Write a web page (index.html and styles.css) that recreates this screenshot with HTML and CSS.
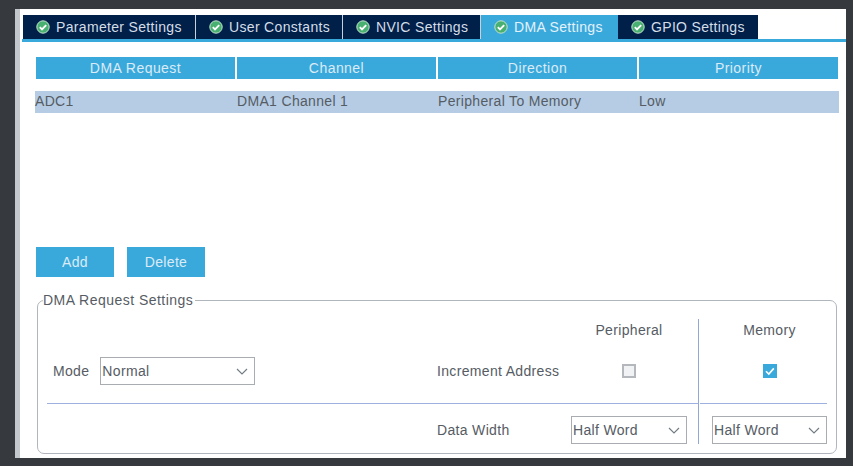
FILE: index.html
```html
<!DOCTYPE html>
<html lang="en">
<head>
    <meta charset="UTF-8">
    <title>DMA Settings</title>
    <link rel="stylesheet" href="styles.css">
</head>
<body>

<div class="panel">
    <div class="tabs">
        <div class="tab tab-param"><svg class="ok" viewBox="0 0 14 14"><circle cx="7" cy="7" r="6.2" fill="#48b070" stroke="#c4e2cf" stroke-width="1"/><path d="M3.8 7.1l2.2 2.2 4.2-4.2" fill="none" stroke="#fff" stroke-width="1.9"/></svg>Parameter Settings</div>
        <div class="tab tab-user"><svg class="ok" viewBox="0 0 14 14"><circle cx="7" cy="7" r="6.2" fill="#48b070" stroke="#c4e2cf" stroke-width="1"/><path d="M3.8 7.1l2.2 2.2 4.2-4.2" fill="none" stroke="#fff" stroke-width="1.9"/></svg>User Constants</div>
        <div class="tab tab-nvic"><svg class="ok" viewBox="0 0 14 14"><circle cx="7" cy="7" r="6.2" fill="#48b070" stroke="#c4e2cf" stroke-width="1"/><path d="M3.8 7.1l2.2 2.2 4.2-4.2" fill="none" stroke="#fff" stroke-width="1.9"/></svg>NVIC Settings</div>
        <div class="tab tab-dma active"><svg class="ok" viewBox="0 0 14 14"><circle cx="7" cy="7" r="6.2" fill="#48b070" stroke="#c4e2cf" stroke-width="1"/><path d="M3.8 7.1l2.2 2.2 4.2-4.2" fill="none" stroke="#fff" stroke-width="1.9"/></svg>DMA Settings</div>
        <div class="tab tab-gpio"><svg class="ok" viewBox="0 0 14 14"><circle cx="7" cy="7" r="6.2" fill="#48b070" stroke="#c4e2cf" stroke-width="1"/><path d="M3.8 7.1l2.2 2.2 4.2-4.2" fill="none" stroke="#fff" stroke-width="1.9"/></svg>GPIO Settings</div>
    </div>

    <div class="content">
        <div class="thead">
            <div>DMA Request</div>
            <div>Channel</div>
            <div>Direction</div>
            <div>Priority</div>
        </div>
        <div class="trow">
            <div>ADC1</div>
            <div>DMA1 Channel 1</div>
            <div>Peripheral To Memory</div>
            <div>Low</div>
        </div>

        <div class="buttons">
            <button class="btn">Add</button>
            <button class="btn">Delete</button>
        </div>

        <fieldset class="settings">
            <legend>DMA Request Settings</legend>
            <div class="grid">
                <div class="head-empty"></div>
                <div class="col-peri col-head">Peripheral</div>
                <div class="col-mem col-head">Memory</div>

                <div class="mode line">
                    <span class="mode-label">Mode</span>
                    <div class="combo combo-mode">Normal<svg class="chev" viewBox="0 0 12 7"><path d="M1 1l5 5 5-5" fill="none" stroke="#6f7a84" stroke-width="1.1"/></svg></div>
                </div>
                <div class="label line">Increment Address</div>
                <div class="col-peri line"><span class="check"></span></div>
                <div class="col-mem line"><span class="check checked"><svg viewBox="0 0 14 14"><path d="M3 7.2l2.8 2.8 5-5.6" fill="none" stroke="#fff" stroke-width="1.6"/></svg></span></div>

                <div class="last"></div>
                <div class="label last"><span class="last-text">Data Width</span></div>
                <div class="col-peri last"><div class="combo">Half Word<svg class="chev" viewBox="0 0 12 7"><path d="M1 1l5 5 5-5" fill="none" stroke="#6f7a84" stroke-width="1.1"/></svg></div></div>
                <div class="col-mem last"><div class="combo">Half Word<svg class="chev" viewBox="0 0 12 7"><path d="M1 1l5 5 5-5" fill="none" stroke="#6f7a84" stroke-width="1.1"/></svg></div></div>
            </div>
        </fieldset>
    </div>
</div>

</body>
</html>
```

FILE: styles.css
```css
html, body {
    height: 100%;
}
body {
    font-family: "Liberation Sans", Arial, sans-serif;
    font-size: 14px;
    letter-spacing: 0.33px;
    margin: 0;
    padding: 9px 7px 8px 15px;
    box-sizing: border-box;
    background-color: #363a3e;
    color: #565c64;
    overflow: hidden;
}
.panel {
    height: 449px;
    background-color: #fff;
    border-left: 5px solid #c3c8cc;
    padding-top: 6px;
    box-sizing: border-box;
}
.tabs {
    display: flex;
    height: 24px;
    margin-left: 2px;
    padding-left: 1px;
    border-bottom: 3px solid #39a9dc;
    box-sizing: content-box;
}
.tab {
    display: flex;
    align-items: center;
    padding-left: 13px;
    box-sizing: border-box;
    background-color: #00204a;
    color: #d5dde6;
    border-right: 1px solid #c8d0d8;
}
.tab-param { width: 173px; }
.tab-user { width: 147px; }
.tab-nvic { width: 138px; }
.tab-dma { width: 137px; }
.tab-gpio { width: 140px; border-right: none; }
.tab.active {
    background-color: #39a9dc;
    color: #e3f1f9;
    border-right: none;
}
.ok {
    width: 14px;
    height: 14px;
    margin-right: 6px;
}
.content {
    padding: 15px 7px 0 15px;
}
.thead {
    display: grid;
    grid-template-columns: 199px 199px 199px 199px;
    column-gap: 2px;
    height: 22px;
    line-height: 22px;
    margin-left: 1px;
    text-align: center;
    color: #dcebf5;
    letter-spacing: 0.45px;
}
.thead div {
    background-color: #39a9dc;
}
.trow {
    display: grid;
    grid-template-columns: 202px 201px 201px 1fr;
    height: 22px;
    line-height: 21px;
    margin-top: 12px;
    background-color: #b5cce4;
}
.buttons {
    display: flex;
    gap: 13px;
    margin-top: 134px;
    margin-left: 1px;
}
.btn {
    width: 78px;
    height: 30px;
    background-color: #39a9dc;
    color: #dcebf5;
    border: none;
    padding: 0;
    font-family: inherit;
    font-size: 14px;
    letter-spacing: 0.33px;
}
.settings {
    margin: 15px 2px 0 2px;
    padding: 0 9px;
    height: 162px;
    box-sizing: border-box;
    border: 1px solid #b0b6bc;
    border-radius: 7px;
}
.settings legend {
    padding: 0 2px 0 0;
    margin-left: -4px;
    letter-spacing: 0.47px;
}
.grid {
    display: grid;
    grid-template-columns: 390px 121px 141px 128px;
    grid-template-rows: 26px 59px 40px;
    margin-top: 11px;
}
.grid > div {
    display: flex;
    align-items: center;
}
.grid > .col-head {
    align-items: flex-start;
    line-height: 22px;
}
.grid > .last {
    align-items: flex-end;
}
.last-text {
    line-height: 28px;
}
.label {
    white-space: nowrap;
}
.head-empty {
    grid-column: span 2;
}
.col-peri {
    justify-content: center;
    border-right: 1px solid #92a6dc;
    padding: 0 11px 0 13px;
}
.col-mem {
    justify-content: center;
    padding-left: 12px;
    margin-left: 1px;
}
.line {
    border-bottom: 1px solid #9db0e0;
    padding-bottom: 7px;
}
.col-peri.line, .col-mem.line {
    padding-bottom: 7px;
}
.mode {
    padding-left: 6px;
    gap: 11px;
}
.combo {
    position: relative;
    width: 100%;
    height: 28px;
    line-height: 26px;
    box-sizing: border-box;
    border: 1px solid #a9adb1;
    padding-left: 1px;
}
.combo-mode {
    width: 155px;
}
.chev {
    position: absolute;
    right: 6px;
    top: 10px;
    width: 12px;
    height: 7px;
}
.check {
    display: block;
    width: 14px;
    height: 14px;
    box-sizing: border-box;
    border: 2px solid #b4b8bc;
    background-color: #f0f2f4;
}
.check.checked {
    border: none;
    background-color: #39a9dc;
}
.check svg {
    display: block;
}
```
